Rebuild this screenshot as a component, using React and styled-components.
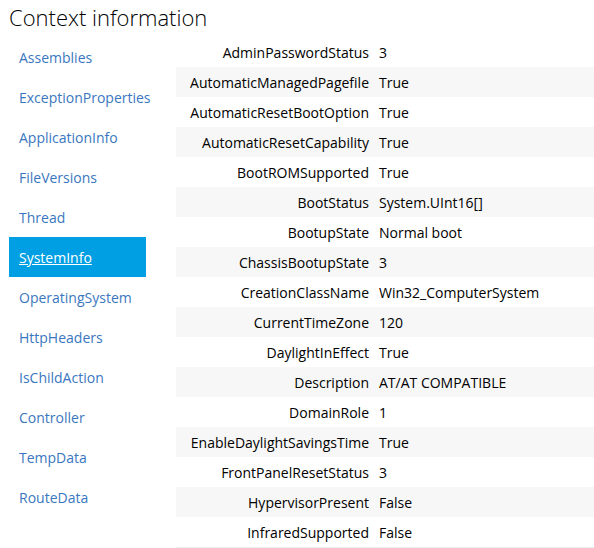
import React from "react";
import styled, { createGlobalStyle } from "styled-components";

const GlobalStyle = createGlobalStyle`
  html, body {
    margin: 0;
    padding: 0;
    background: #ffffff;
    font-family: "Open Sans", "Noto Sans", sans-serif;
    color: #000;
    overflow: hidden;
  }
`;

const Page = styled.div`
  width: 594px;
  height: 548px;
  overflow: hidden;
  padding: 0 0 0 9px;
  box-sizing: border-box;
`;

const Title = styled.h1`
  margin: 0;
  font-family: "Open Sans", sans-serif;
  font-weight: 300;
  font-size: 22px;
  line-height: 34px;
  color: #000;
`;

const Body = styled.div`
  display: flex;
  align-items: flex-start;
  margin-top: 3px;
`;

const Nav = styled.ul`
  list-style: none;
  margin: 0;
  padding: 0;
  width: 137px;
  flex: none;
`;

const NavItem = styled.li`
  height: 40px;
  display: flex;
  align-items: center;
  padding-left: 10px;
  font-size: 14px;
  color: ${(p) => (p.$active ? "#ffffff" : "#3a77c0")};
  background: ${(p) => (p.$active ? "#009fe3" : "transparent")};
  text-decoration: ${(p) => (p.$active ? "underline" : "none")};
`;

const Table = styled.div`
  margin-left: 30px;
  flex: 1;
  border-bottom: 1px solid #eeeeee;
`;

const Row = styled.div`
  display: grid;
  grid-template-columns: 193px 1fr;
  column-gap: 10px;
  height: 30px;
  align-items: center;
  font-size: 14px;
  background: ${(p) => (p.$alt ? "#f7f7f7" : "transparent")};
`;

const Key = styled.span`
  text-align: right;
  white-space: nowrap;
  color: #000;
`;

const Value = styled.span`
  white-space: nowrap;
  color: #000;
`;

const navItems = [
  "Assemblies",
  "ExceptionProperties",
  "ApplicationInfo",
  "FileVersions",
  "Thread",
  "SystemInfo",
  "OperatingSystem",
  "HttpHeaders",
  "IsChildAction",
  "Controller",
  "TempData",
  "RouteData",
];

const rows = [
  ["AdminPasswordStatus", "3"],
  ["AutomaticManagedPagefile", "True"],
  ["AutomaticResetBootOption", "True"],
  ["AutomaticResetCapability", "True"],
  ["BootROMSupported", "True"],
  ["BootStatus", "System.UInt16[]"],
  ["BootupState", "Normal boot"],
  ["ChassisBootupState", "3"],
  ["CreationClassName", "Win32_ComputerSystem"],
  ["CurrentTimeZone", "120"],
  ["DaylightInEffect", "True"],
  ["Description", "AT/AT COMPATIBLE"],
  ["DomainRole", "1"],
  ["EnableDaylightSavingsTime", "True"],
  ["FrontPanelResetStatus", "3"],
  ["HypervisorPresent", "False"],
  ["InfraredSupported", "False"],
];

const App = () => {
  return (
    <Page>
      <GlobalStyle />
      <Title>Context information</Title>
      <Body>
        <Nav>
          {navItems.map((item) => (
            <NavItem key={item} $active={item === "SystemInfo"}>
              {item}
            </NavItem>
          ))}
        </Nav>
        <Table>
          {rows.map(([k, v], i) => (
            <Row key={k} $alt={i % 2 === 1}>
              <Key>{k}</Key>
              <Value>{v}</Value>
            </Row>
          ))}
        </Table>
      </Body>
    </Page>
  );
};

export default App;
